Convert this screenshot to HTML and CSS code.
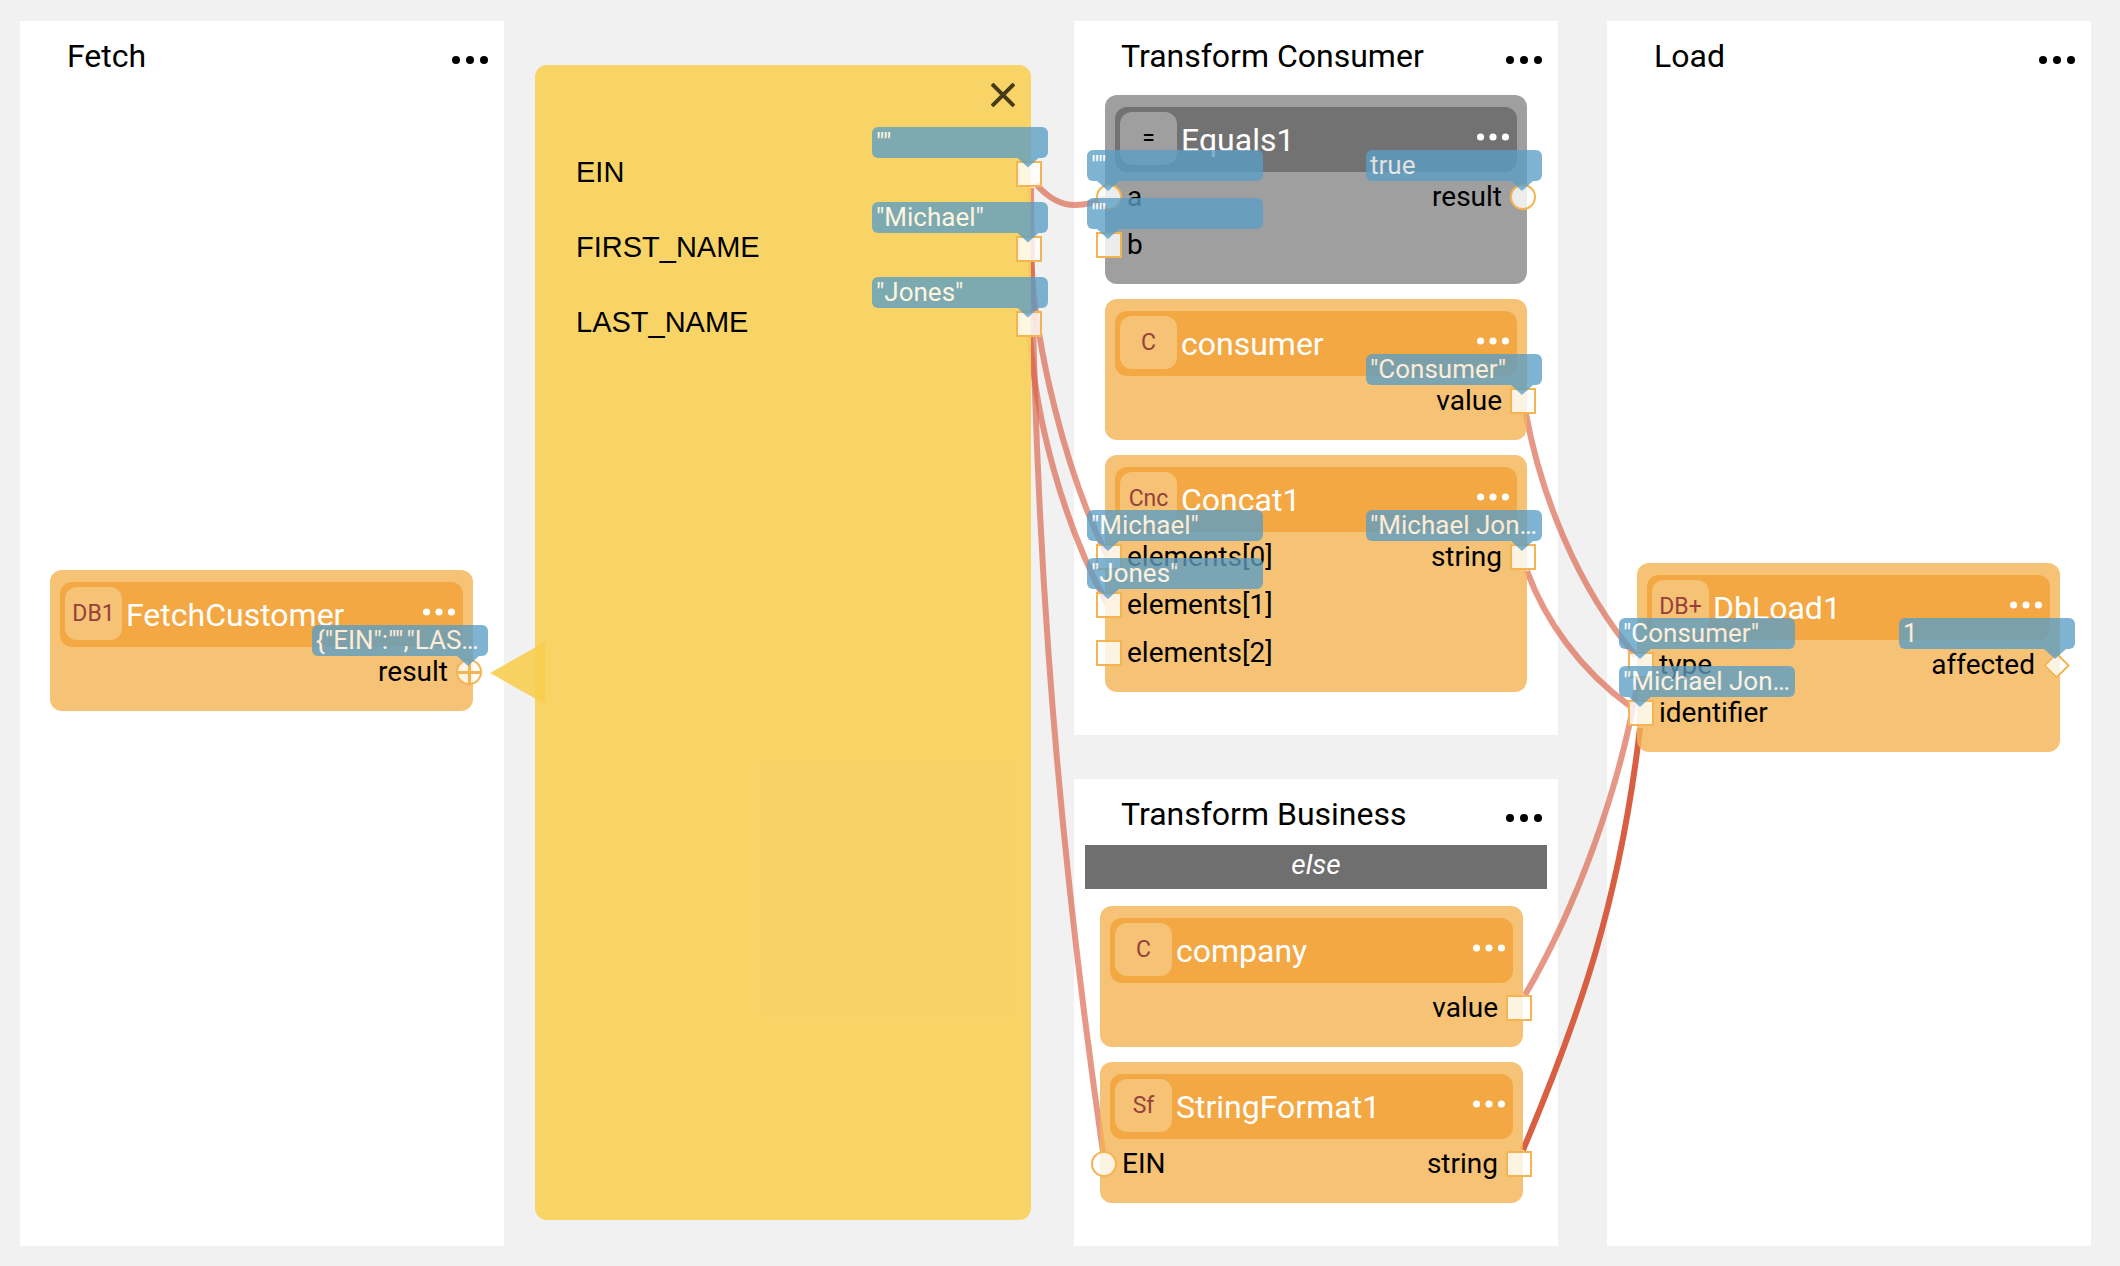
FILE: index.html
```html
<!DOCTYPE html>
<html lang="en">
<head>
<meta charset="utf-8">
<meta name="viewport" content="width=device-width, initial-scale=1">
<title>Pipeline</title>
<link rel="stylesheet" href="styles.css">
</head>
<body>
<svg class="sprite" aria-hidden="true">
  <symbol id="dots" viewBox="0 0 36 8"><circle cx="4" cy="4" r="4"/><circle cx="18" cy="4" r="4"/><circle cx="32" cy="4" r="4"/></symbol>
  <symbol id="close" viewBox="0 0 24 24"><path d="M1 1 23 23M23 1 1 23" fill="none" stroke="currentColor" stroke-width="4"/></symbol>
</svg>
<main class="board">
  <svg class="wires" viewBox="0 0 2120 1266" preserveAspectRatio="none" aria-hidden="true">
    <path d="M1036 184C1050 200 1062 205 1075 205C1088 205 1098 201 1109 197"/>
    <path d="M1031 188C1033 500 1052 800 1103 1152"/>
    <path d="M1031 262C1036 350 1065 470 1107 556"/>
    <path d="M1030 337C1036 420 1062 520 1107 604"/>
    <path d="M1526 414C1540 490 1575 585 1636 656"/>
    <path d="M1527 571C1545 620 1580 670 1630 706"/>
    <path d="M1525 995C1575 910 1620 790 1638 680"/>
    <path class="wire-active" d="M1523 1150C1580 1015 1620 900 1640 728"/>
  </svg>

  <section class="lane">
    <header class="lane-head"><h2>Fetch</h2><button class="menu" aria-label="Fetch menu"><svg><use href="#dots"/></svg></button></header>
    <article class="node node-fetch">
      <header class="node-head"><span class="badge">DB1</span><h3>FetchCustomer</h3><button class="menu" aria-label="FetchCustomer menu"><svg><use href="#dots"/></svg></button></header>
      <div class="ports">
        <ul class="inputs"></ul>
        <ul class="outputs">
          <li><span class="name">result</span><span class="port"><i class="round cross"></i><span class="tip">{"EIN":"","LAS…</span></span></li>
        </ul>
      </div>
    </article>
  </section>

  <section class="detail">
    <div class="panel">
      <header class="panel-head"><button class="close" aria-label="Close"><svg><use href="#close"/></svg></button></header>
      <ul class="fields outputs">
        <li><span class="name">EIN</span><span class="port"><i></i><span class="tip">""</span></span></li>
        <li><span class="name">FIRST_NAME</span><span class="port"><i></i><span class="tip">"Michael"</span></span></li>
        <li><span class="name">LAST_NAME</span><span class="port"><i></i><span class="tip">"Jones"</span></span></li>
      </ul>
    </div>
  </section>

  <div class="branches">
    <section class="lane">
      <header class="lane-head"><h2>Transform Consumer</h2><button class="menu" aria-label="Transform Consumer menu"><svg><use href="#dots"/></svg></button></header>
      <div class="stack">
        <article class="node node-muted">
          <header class="node-head"><span class="badge">=</span><h3>Equals1</h3><button class="menu" aria-label="Equals1 menu"><svg><use href="#dots"/></svg></button></header>
          <div class="ports">
            <ul class="inputs">
              <li><span class="port"><i class="round"></i><span class="tip">""</span></span><span class="name">a</span></li>
              <li><span class="port"><i></i><span class="tip">""</span></span><span class="name">b</span></li>
            </ul>
            <ul class="outputs">
              <li><span class="name">result</span><span class="port"><i class="round"></i><span class="tip">true</span></span></li>
            </ul>
          </div>
        </article>
        <article class="node">
          <header class="node-head"><span class="badge">C</span><h3>consumer</h3><button class="menu" aria-label="consumer menu"><svg><use href="#dots"/></svg></button></header>
          <div class="ports">
            <ul class="inputs"></ul>
            <ul class="outputs">
              <li><span class="name">value</span><span class="port"><i></i><span class="tip">"Consumer"</span></span></li>
            </ul>
          </div>
        </article>
        <article class="node">
          <header class="node-head"><span class="badge">Cnc</span><h3>Concat1</h3><button class="menu" aria-label="Concat1 menu"><svg><use href="#dots"/></svg></button></header>
          <div class="ports">
            <ul class="inputs">
              <li><span class="port"><i></i><span class="tip">"Michael"</span></span><span class="name">elements[0]</span></li>
              <li><span class="port"><i></i><span class="tip">"Jones"</span></span><span class="name">elements[1]</span></li>
              <li><span class="port"><i></i></span><span class="name">elements[2]</span></li>
            </ul>
            <ul class="outputs">
              <li><span class="name">string</span><span class="port"><i></i><span class="tip">"Michael Jon…</span></span></li>
            </ul>
          </div>
        </article>
      </div>
    </section>

    <section class="lane lane-else">
      <header class="lane-head"><h2>Transform Business</h2><button class="menu" aria-label="Transform Business menu"><svg><use href="#dots"/></svg></button></header>
      <p class="condition">else</p>
      <div class="stack">
        <article class="node">
          <header class="node-head"><span class="badge">C</span><h3>company</h3><button class="menu" aria-label="company menu"><svg><use href="#dots"/></svg></button></header>
          <div class="ports">
            <ul class="inputs"></ul>
            <ul class="outputs">
              <li><span class="name">value</span><span class="port"><i></i></span></li>
            </ul>
          </div>
        </article>
        <article class="node">
          <header class="node-head"><span class="badge">Sf</span><h3>StringFormat1</h3><button class="menu" aria-label="StringFormat1 menu"><svg><use href="#dots"/></svg></button></header>
          <div class="ports">
            <ul class="inputs">
              <li><span class="port"><i class="round"></i></span><span class="name">EIN</span></li>
            </ul>
            <ul class="outputs">
              <li><span class="name">string</span><span class="port"><i></i></span></li>
            </ul>
          </div>
        </article>
      </div>
    </section>
  </div>

  <section class="lane lane-load">
    <header class="lane-head"><h2>Load</h2><button class="menu" aria-label="Load menu"><svg><use href="#dots"/></svg></button></header>
    <article class="node node-load">
      <header class="node-head"><span class="badge">DB+</span><h3>DbLoad1</h3><button class="menu" aria-label="DbLoad1 menu"><svg><use href="#dots"/></svg></button></header>
      <div class="ports">
        <ul class="inputs">
          <li><span class="port"><i></i><span class="tip">"Consumer"</span></span><span class="name">type</span></li>
          <li><span class="port"><i></i><span class="tip">"Michael Jon…</span></span><span class="name">identifier</span></li>
        </ul>
        <ul class="outputs">
          <li><span class="name">affected</span><span class="port"><i class="diamond"></i><span class="tip">1</span></span></li>
        </ul>
      </div>
    </article>
  </section>
</main>
</body>
</html>
```
FILE: styles.css
```css
* { box-sizing: border-box; }

body {
  margin: 0;
  background: #f1f1f1;
  color: #000;
  font-family: Roboto, "Liberation Sans", sans-serif;
  font-size: 28px;
}

h2, h3, p, ul { margin: 0; padding: 0; font-weight: 400; }
ul { list-style: none; }
button { margin: 0; padding: 0; border: 0; background: none; color: inherit; font: inherit; cursor: pointer; }
.sprite { display: none; }

.board {
  position: relative;
  display: grid;
  grid-template-columns: minmax(0, 484fr) minmax(0, 570fr) minmax(0, 484fr) minmax(0, 533fr);
  padding: 21px 29px 20px 20px;
}

/* Connections between ports, drawn over the lanes and under the nodes */
.wires {
  position: absolute;
  inset: 0;
  z-index: 1;
  width: 100%;
  height: 100%;
  pointer-events: none;
}
.wires path {
  fill: none;
  stroke: #d95f43;
  stroke-width: 6;
  stroke-opacity: .65;
  vector-effect: non-scaling-stroke;
}
.wires .wire-active { stroke-opacity: 1; }

/* Lanes */
.lane { position: relative; background: #fff; }
.lane-load { margin-left: 49px; }
.branches { display: flex; flex-direction: column; gap: 44px; }
.branches .lane { padding-bottom: 43px; }

.lane-head {
  display: flex;
  align-items: flex-start;
  justify-content: space-between;
  height: 74px;
  padding: 15px 16px 0 47px;
}
.lane-head h2 { font-size: 32px; line-height: 40px; white-space: nowrap; }
.menu { display: flex; align-items: center; }
.menu svg { display: block; width: 36px; height: 8px; fill: currentColor; }
.lane-head .menu { height: 48px; }

.stack { display: flex; flex-direction: column; gap: 15px; margin: 0 31px; }
.lane-else .lane-head { height: 66px; }
.lane-else .stack { margin: 17px 35px 0 26px; }
.condition {
  margin: 0 11px;
  background: #6f6f6f;
  color: #fff;
  font-style: italic;
  line-height: 40px;
  padding-bottom: 4px;
  text-align: center;
}

/* Nodes */
.node {
  position: relative;
  z-index: 2;
  padding: 12px 10px 15px;
  border-radius: 12px;
  background: rgba(244, 179, 83, .8);
}
.node-fetch { position: absolute; top: 549px; left: 30px; right: 31px; }
.node-load { position: absolute; top: 542px; left: 30px; right: 31px; }

.node-head {
  display: flex;
  align-items: center;
  gap: 4px;
  height: 65px;
  padding: 5px 8px 7px 5px;
  border-radius: 12px;
  background: #f3a843;
  color: #fff;
}
.node-head h3 { flex: 1; padding-top: 2px; font-size: 32px; line-height: 40px; white-space: nowrap; }
.node-head .menu { padding-bottom: 4px; }
.node-head .menu svg { width: 32px; }
.badge {
  width: 57px;
  border-radius: 12px;
  background: #f6c275;
  color: #96413b;
  font-size: 23px;
  line-height: 53px;
  text-align: center;
}
.node-muted { background: #9f9f9f; }
.node-muted .node-head { background: #727272; }
.node-muted .badge { background: #9f9f9f; color: #000; }

/* Ports */
.ports { display: flex; justify-content: space-between; margin: 1px -10px 0; }
.inputs li, .outputs li { display: flex; align-items: center; height: 48px; }
.inputs li { gap: 5px; margin-left: -9px; }
.outputs li { gap: 8px; justify-content: flex-end; margin-right: -9px; }
.name { padding-bottom: 2px; }

.port { position: relative; flex: none; display: grid; place-items: center; width: 26px; height: 26px; }
.port i {
  width: 26px;
  height: 26px;
  border: 2px solid #f5b452;
  background: rgba(255, 255, 255, .8);
}
.port .round { border-radius: 50%; }
.port .cross {
  background:
    linear-gradient(#f5b452, #f5b452) center / 3px 100% no-repeat,
    linear-gradient(#f5b452, #f5b452) center / 100% 3px no-repeat,
    rgba(255, 255, 255, .8);
}
.port .diamond { width: 19px; height: 19px; transform: rotate(45deg); }

/* Value bubbles above ports */
.tip {
  position: absolute;
  top: -34px;
  left: -9px;
  width: 176px;
  height: 31px;
  padding-left: 4px;
  border-radius: 6px;
  background: #5b9ec6;
  color: #fff;
  font-size: 26px;
  line-height: 30px;
  white-space: nowrap;
  opacity: .78;
}
.tip::after {
  content: "";
  position: absolute;
  top: 100%;
  left: 10px;
  width: 22px;
  height: 10px;
  background: inherit;
  clip-path: polygon(0 0, 100% 0, 50% 100%);
}
.outputs .tip { left: -144px; }
.outputs .tip::after { left: 145px; }

/* Result detail panel */
.detail { padding: 44px 43px 26px 31px; }
.panel {
  position: relative;
  z-index: 2;
  height: 100%;
  border-radius: 12px;
  background: rgba(248, 208, 88, .9);
}
.panel::before {
  content: "";
  position: absolute;
  top: 577px;
  left: -45px;
  width: 55px;
  height: 62px;
  background: rgba(248, 206, 80, .9);
  clip-path: polygon(0 50%, 100% 0, 100% 100%);
}
.panel-head { display: flex; justify-content: flex-end; height: 71px; padding: 18px 16px; }
.close { display: block; width: 24px; height: 24px; color: #463b18; }
.close svg { display: block; width: 24px; height: 24px; }
.fields { padding-left: 41px; font-family: "Liberation Sans", Arial, sans-serif; font-size: 29px; }
.fields li { justify-content: space-between; height: 75px; margin-right: -11px; }
.fields .tip { font-family: Roboto, "Liberation Sans", sans-serif; }
```
